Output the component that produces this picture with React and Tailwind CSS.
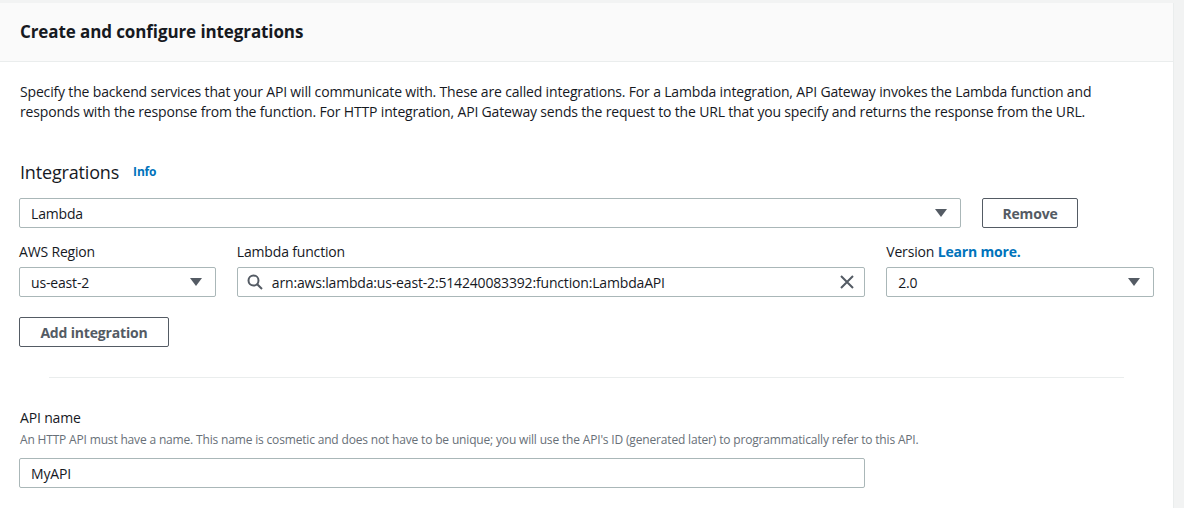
const Caret = () => (
  <svg width="12" height="8" viewBox="0 0 12 8" className="shrink-0">
    <path d="M0 0 H12 L6 8 Z" fill="#545b64" />
  </svg>
);

const SelectBox = ({ value, className }) => (
  <div
    className={`h-[30px] flex items-center justify-between pl-[11px] pr-[13px] border border-[#aab7b8] rounded-[2px] bg-white text-[14px] text-[#16191f] ${className}`}
  >
    <span>{value}</span>
    <Caret />
  </div>
);

const Label = ({ children }) => (
  <div className="h-5 leading-5 mb-[5px] text-[14px] text-[#16191f]">{children}</div>
);

const App = () => {
  return (
    <div
      className="h-[508px] bg-[#f2f3f3] pt-[3px] overflow-hidden tracking-[-0.17px]"
      style={{ fontFamily: '"Open Sans", Arial, sans-serif' }}
    >
      <div className="w-[1174px] h-full bg-white border-r border-[#eaeded]">
        {/* header */}
        <div className="h-[59px] bg-[#fafafa] border-b border-[#eaeded] px-5 flex items-center">
          <h2 className="text-[17px] font-bold text-[#16191f] tracking-[-0.1px]">Create and configure integrations</h2>
        </div>

        <div className="px-[19px]">
          <p className="pt-5 pl-px text-[14px] leading-5 text-[#16191f] w-[1110px]">
            Specify the backend services that your API will communicate with. These are called integrations. For a Lambda
            integration, API Gateway invokes the Lambda function and responds with the response from the function. For HTTP
            integration, API Gateway sends the request to the URL that you specify and returns the response from the URL.
          </p>

          <div className="mt-[38px] flex items-center h-6 pl-px">
            <span className="text-[18px] text-[#16191f]">Integrations</span>
            <a className="ml-[14px] text-[12px] font-bold text-[#0073bb]">Info</a>
          </div>

          <div className="mt-[14px] flex items-center gap-[21px]">
            <SelectBox value="Lambda" className="w-[942px]" />
            <button className="h-[30px] w-[96px] border border-[#545b64] rounded-[2px] text-[14px] font-bold text-[#545b64]">
              Remove
            </button>
          </div>

          <div className="mt-[14px] flex gap-[21px]">
            <div className="w-[197px]">
              <Label>AWS Region</Label>
              <SelectBox value="us-east-2" />
            </div>
            <div className="w-[629px]">
              <Label>Lambda function</Label>
              <div className="h-[30px] flex items-center pl-[9px] pr-[10px] border border-[#aab7b8] rounded-[2px] text-[14px] text-[#16191f]">
                <svg width="16" height="16" viewBox="0 0 16 16" fill="none" stroke="#545b64" strokeWidth="2" className="shrink-0">
                  <circle cx="6.5" cy="6.5" r="5" />
                  <path d="M10.2 10.2 L15 15" />
                </svg>
                <span className="ml-[9px] flex-1">arn:aws:lambda:us-east-2:514240083392:function:LambdaAPI</span>
                <svg width="14" height="14" viewBox="0 0 14 14" fill="none" stroke="#545b64" strokeWidth="2" className="shrink-0">
                  <path d="M1 1 L13 13 M13 1 L1 13" />
                </svg>
              </div>
            </div>
            <div className="w-[268px]">
              <Label>
                Version <a className="font-bold text-[#0073bb]">Learn more.</a>
              </Label>
              <SelectBox value="2.0" />
            </div>
          </div>

          <button className="mt-5 h-[30px] w-[150px] border border-[#545b64] rounded-[2px] text-[14px] font-bold text-[#545b64]">
            Add integration
          </button>

          <div className="mt-[30px] mx-[30px] border-t border-[#eaeded]" />

          <div className="mt-[30px] pl-px">
            <div className="h-5 leading-5 text-[14px] text-[#16191f]">API name</div>
            <div className="mt-1 h-4 leading-4 text-[12px] text-[#687078]">
              An HTTP API must have a name. This name is cosmetic and does not have to be unique; you will use the API's ID
              (generated later) to programmatically refer to this API.
            </div>
          </div>

          <div className="mt-[10px] w-[846px] h-[30px] flex items-center pl-[11px] border border-[#aab7b8] rounded-[2px] text-[14px] text-[#16191f]">
            MyAPI
          </div>
        </div>
      </div>
    </div>
  );
};

export default App;
